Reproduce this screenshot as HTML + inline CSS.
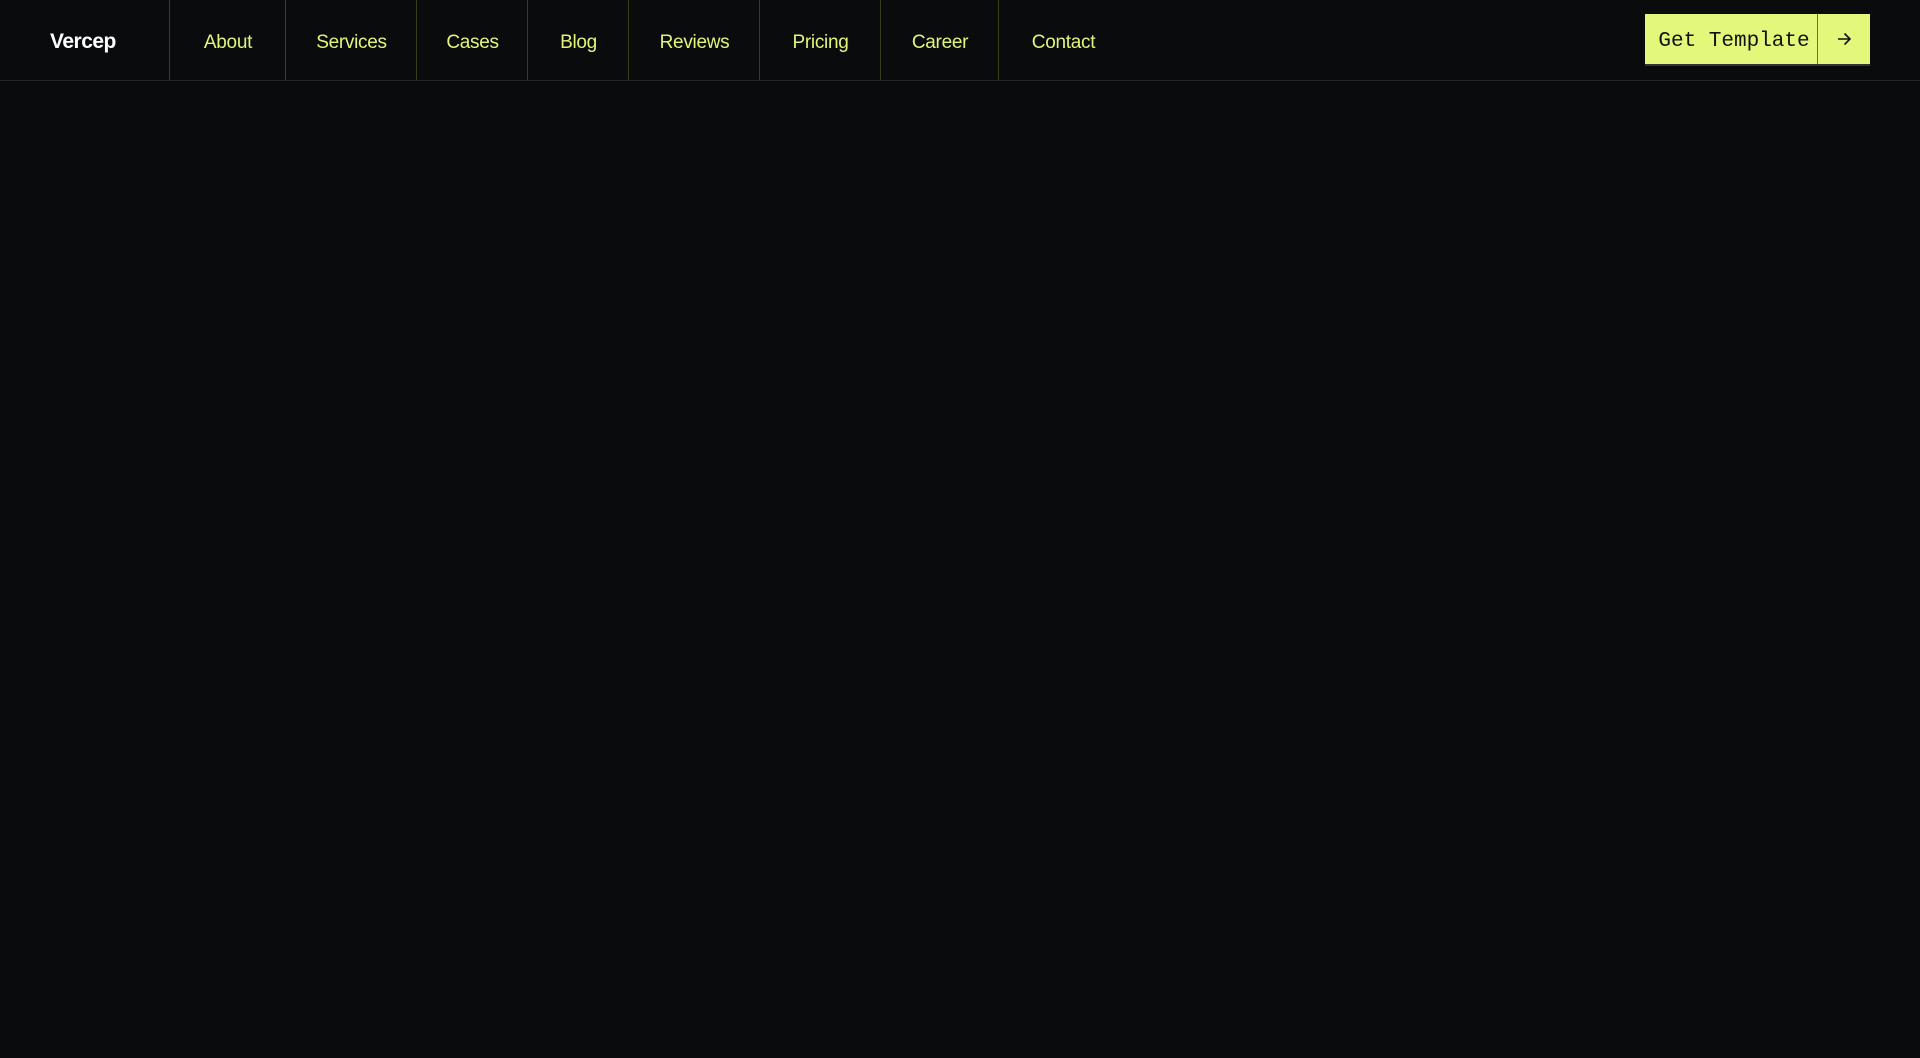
<!DOCTYPE html>
<html><head><meta charset="utf-8"><style>
*{margin:0;padding:0;box-sizing:border-box}
body{width:1920px;height:1058px;background:#0a0b0d;overflow:hidden;font-family:"Liberation Sans",sans-serif}
.nav{position:absolute;left:0;top:0;width:1920px;height:81px;border-bottom:1px solid #232427}
.logo{position:absolute;left:50px;top:30px;color:#fff;font-weight:bold;font-size:21px;letter-spacing:-0.5px}
.c{position:absolute;top:0;height:80px;padding-top:6px;border-left:1px solid #3a3c1e;color:#e2f57a;font-size:19px;display:flex;align-items:center;justify-content:center;letter-spacing:-0.3px}
.btn{position:absolute;left:1645px;top:14px;width:225px;height:52px;background:#e3f87a;border-bottom:2px solid #333;display:flex}
.btn .t{width:173px;padding-top:4px;padding-left:6px;border-right:1px solid #6b6e3a;display:flex;align-items:center;justify-content:center;font-family:"Liberation Mono",monospace;font-size:21px;color:#111}
.btn .a{flex:1;display:flex;align-items:center;justify-content:center}
</style></head><body>
<div class="nav">
<div class="logo">Vercep</div>
<div class="c" style="left:169px;width:117px">About</div>
<div class="c" style="left:285px;width:132px">Services</div>
<div class="c" style="left:416px;width:112px">Cases</div>
<div class="c" style="left:527px;width:102px">Blog</div>
<div class="c" style="left:628px;width:132px">Reviews</div>
<div class="c" style="left:759px;width:122px">Pricing</div>
<div class="c" style="left:880px;width:119px">Career</div>
<div class="c" style="left:998px;width:130px;border-right:none">Contact</div>
<div class="btn"><div class="t">Get Template</div><div class="a"><svg width="16" height="14" viewBox="0 0 16 14"><path d="M2 7H14M8.5 1.5L14 7L8.5 12.5" stroke="#111" stroke-width="1.6" fill="none"/></svg></div></div>
</div>
</body></html>
